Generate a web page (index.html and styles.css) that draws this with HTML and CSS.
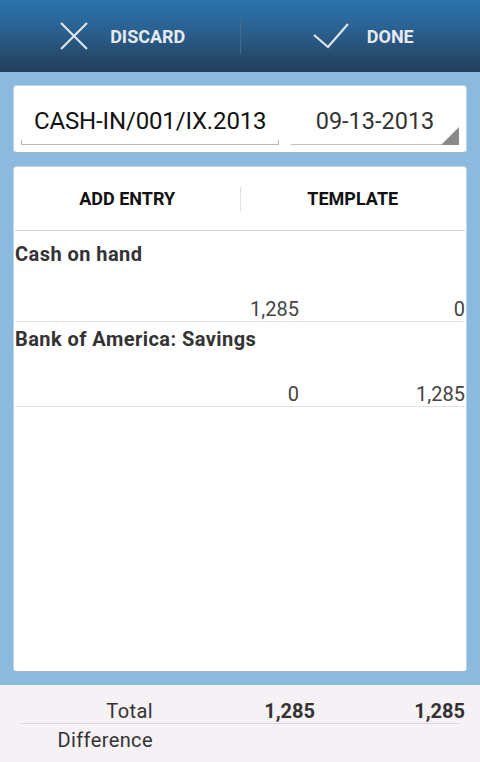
FILE: index.html
```html
<!DOCTYPE html>
<html>
<head>
    <title>Journal Entry</title>
    <link rel="stylesheet" href="styles.css">
</head>
<body>
    <div class="actionbar">
        <div class="action">
            <svg width="28" height="28" viewBox="0 0 28 28"><path d="M1 1 L27 27 M27 1 L1 27" stroke="#dfe4ea" stroke-width="2.2" fill="none"/></svg>
            <span>DISCARD</span>
        </div>
        <div class="bar-divider"></div>
        <div class="action">
            <svg width="36" height="26" viewBox="0 0 36 26"><path d="M1 12 L15 24 L35 1" stroke="#dfe4ea" stroke-width="2.2" fill="none"/></svg>
            <span>DONE</span>
        </div>
    </div>

    <div class="main">
        <div class="card head-card">
            <div class="field number-field">
                <div class="field-text">CASH-IN/001/IX.2013</div>
                <div class="field-line"></div>
            </div>
            <div class="field date-field">
                <div class="field-text">09-13-2013</div>
                <div class="date-line"></div>
                <div class="spinner-corner"></div>
            </div>
        </div>

        <div class="card entries-card">
            <div class="button-row">
                <div class="flat-btn">ADD ENTRY</div>
                <div class="btn-divider"></div>
                <div class="flat-btn">TEMPLATE</div>
            </div>
            <div class="entries">
                <div class="entry">
                    <div class="entry-title">Cash on hand</div>
                    <div class="amounts">
                        <span></span>
                        <span>1,285</span>
                        <span>0</span>
                    </div>
                </div>
                <div class="entry">
                    <div class="entry-title">Bank of America: Savings</div>
                    <div class="amounts">
                        <span></span>
                        <span>0</span>
                        <span>1,285</span>
                    </div>
                </div>
            </div>
        </div>
    </div>

    <div class="totals">
        <div class="total-row">
            <span class="total-label">Total</span>
            <b>1,285</b>
            <b>1,285</b>
        </div>
        <div class="total-rule"></div>
        <div class="total-row diff-row">
            <span class="total-label">Difference</span>
            <b></b>
            <b></b>
        </div>
    </div>
</body>
</html>
```

FILE: styles.css
```css
* {
    box-sizing: border-box;
}

body {
    margin: 0;
    height: 762px;
    display: flex;
    flex-direction: column;
    font-family: Roboto, "Liberation Sans", sans-serif;
    background: #8cb9de;
    color: #333;
}

/* top action bar */
.actionbar {
    height: 72px;
    display: flex;
    align-items: center;
    background: linear-gradient(#2b74ae, #2a5f8d 45%, #233e58);
}

.action {
    flex: 1;
    display: flex;
    align-items: center;
    justify-content: center;
    padding-left: 6px;
    color: #e6eaef;
    font-weight: bold;
    font-size: 18px;
}

.action span {
    margin-left: 22px;
}

.action:last-child span {
    margin-left: 18px;
}

.bar-divider {
    width: 1px;
    height: 36px;
    background: #3f6b92;
}

.main {
    flex: 1;
    display: flex;
    flex-direction: column;
    padding: 13px 13px 13px;
}

.card {
    background: #fff;
    border: 1px solid #c4d3e0;
    border-bottom-color: #a9b4be;
    border-radius: 4px;
}

/* number + date card */
.head-card {
    height: 68px;
    display: flex;
    align-items: flex-end;
    padding: 0 7px 7px;
}

.field {
    display: flex;
    flex-direction: column;
}

.field-text {
    font-size: 24px;
    line-height: 28px;
    margin-bottom: 5px;
}

.number-field {
    width: 258px;
    color: #111;
}

.number-field .field-text {
    padding-left: 13px;
    letter-spacing: -0.15px;
}

.field-line {
    height: 5px;
    border: 1px solid #b9b9b9;
    border-top: none;
}

.date-field {
    position: relative;
    width: 168px;
    margin-left: 12px;
    color: #333;
}

.date-field .field-text {
    text-align: center;
    font-size: 23.5px;
}

.date-line {
    height: 5px;
    border-bottom: 1px solid #c2c2c2;
}

.spinner-corner {
    position: absolute;
    right: 0;
    bottom: 0;
    width: 0;
    height: 0;
    border-left: 18px solid transparent;
    border-bottom: 18px solid #8a8a8a;
}

/* entries card */
.entries-card {
    flex: 1;
    margin-top: 13px;
    padding: 0 1px;
}

.button-row {
    height: 64px;
    display: flex;
    align-items: center;
    border-bottom: 1px solid #cfcfcf;
}

.flat-btn {
    flex: 1;
    text-align: center;
    font-weight: bold;
    font-size: 18px;
    color: #111;
}

.btn-divider {
    width: 1px;
    height: 24px;
    background: #e0e0e0;
}

.entries {
    padding-top: 6px;
}

.entry {
    padding-top: 5px;
    border-bottom: 1px solid #e2e2e2;
}

.entry-title {
    font-weight: bold;
    font-size: 20px;
    line-height: 24px;
    letter-spacing: 0.45px;
    color: #333;
    margin-bottom: 31px;
}

.amounts {
    display: grid;
    grid-template-columns: 1fr 150px 166px;
    font-size: 20px;
    line-height: 24px;
    color: #444;
    text-align: right;
}

/* totals footer */
.totals {
    height: 77px;
    background: #f6f1f5;
    padding: 14px 15px 0;
}

.total-row {
    display: grid;
    grid-template-columns: 138px 162px 1fr;
    font-size: 20px;
    line-height: 24px;
    text-align: right;
    color: #333;
}

.total-label {
    letter-spacing: 0.4px;
}

.total-rule {
    height: 1px;
    margin: 0 6px;
    background: #d9d9de;
}

.diff-row {
    margin-top: 4px;
}
```
